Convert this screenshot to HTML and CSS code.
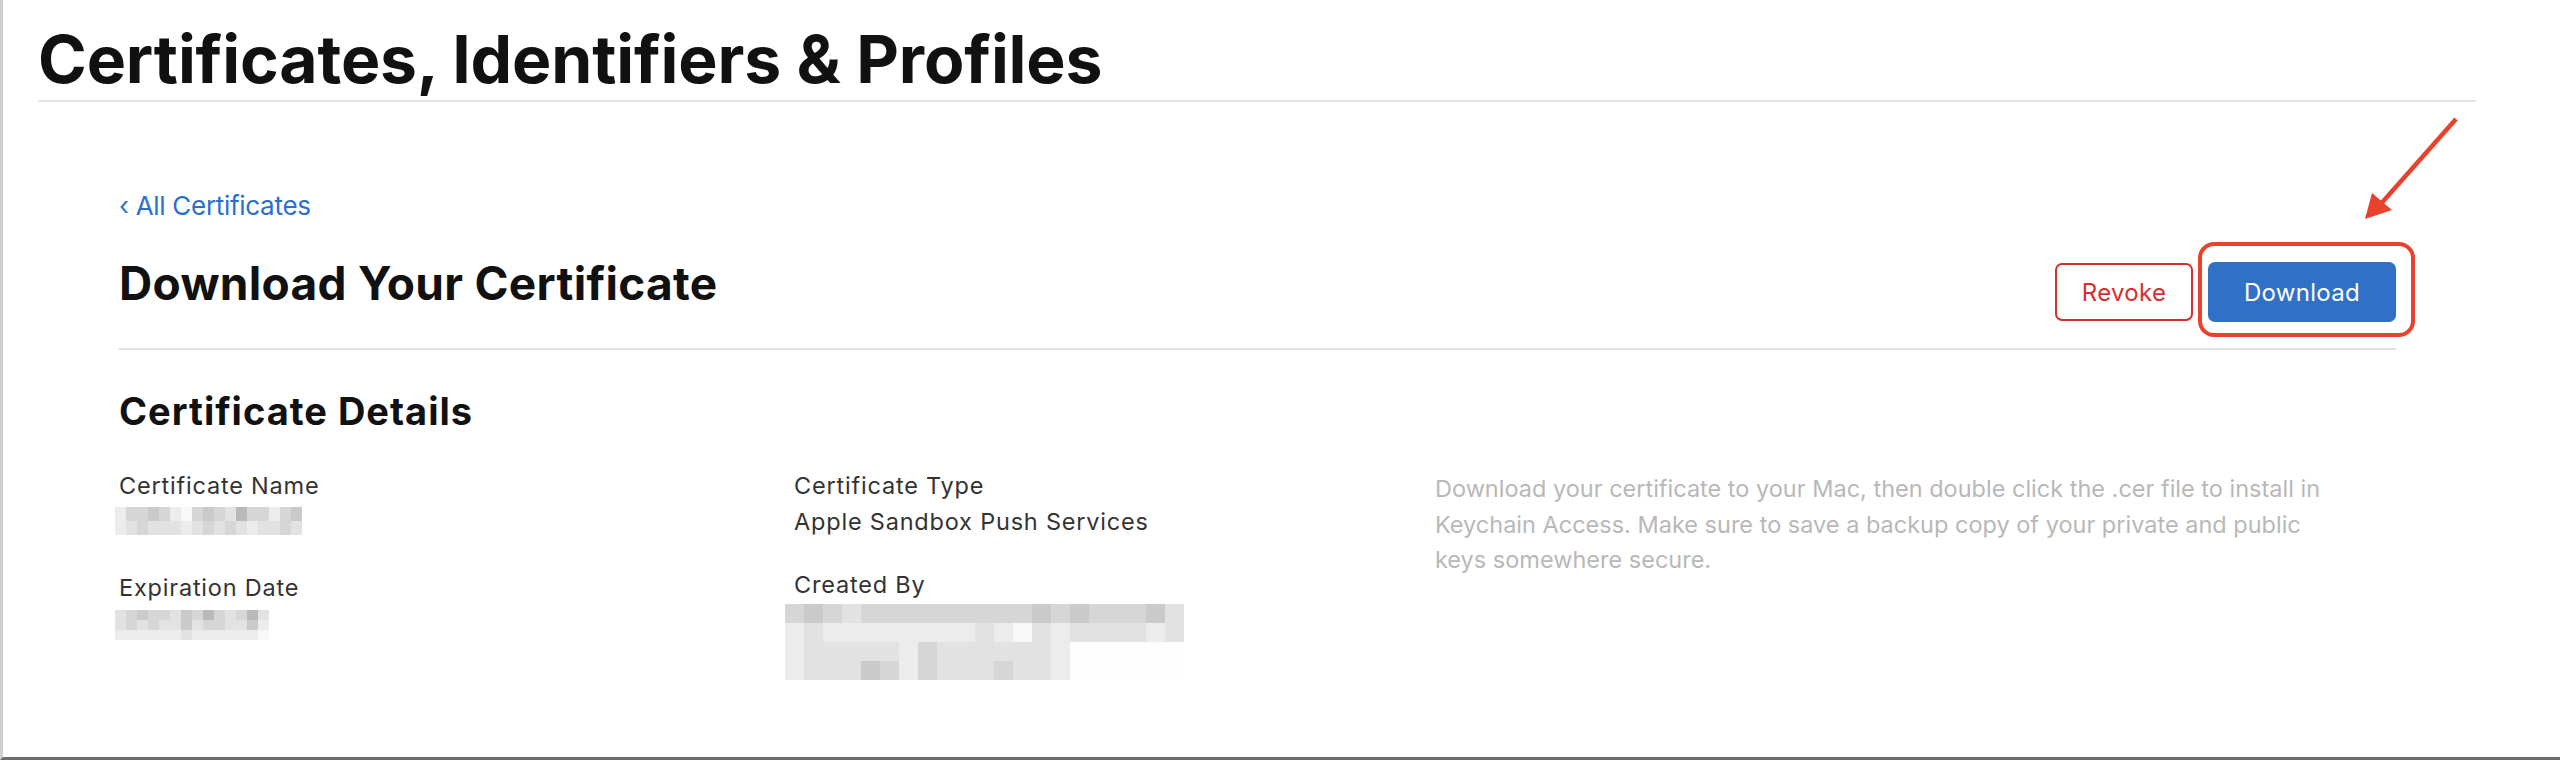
FILE: index.html
```html
<!DOCTYPE html>
<html lang="en">

<head>
    <meta charset="UTF-8">
    <meta name="viewport" content="width=device-width, initial-scale=1.0">
    <title>Certificates, Identifiers &amp; Profiles</title>
    <link rel="stylesheet" href="styles.css">
</head>

<body>
    <div class="page">
        <header class="page-header">
            <h1>Certificates, Identifiers &amp; Profiles</h1>
        </header>

        <main class="content">
            <a class="back-link" href="#">&lsaquo; All Certificates</a>

            <div class="title-row">
                <h2>Download Your Certificate</h2>
                <div class="actions">
                    <button class="btn btn-revoke">Revoke</button>
                    <span class="highlight">
                        <button class="btn btn-download">Download</button>
                    </span>
                </div>
            </div>

            <h3>Certificate Details</h3>

            <div class="details">
                <div class="col">
                    <div class="field">
                        <div class="label">Certificate Name</div>
                        <div class="value">
                            <div class="blur blur-name">
                                <span class="s1"></span><span class="s3"></span><span class="s3"></span><span class="s4"></span><span class="s3"></span><span class="s1"></span><span class="s0"></span><span class="s3"></span><span class="s4"></span><span class="s3"></span><span class="s2"></span><span class="s5"></span><span class="s3"></span><span class="s3"></span><span class="s1"></span><span class="s3"></span><span class="s4"></span>
                                <span class="s1"></span><span class="s2"></span><span class="s3"></span><span class="s2"></span><span class="s2"></span><span class="s2"></span><span class="s1"></span><span class="s2"></span><span class="s3"></span><span class="s2"></span><span class="s3"></span><span class="s2"></span><span class="s1"></span><span class="s2"></span><span class="s2"></span><span class="s3"></span><span class="s2"></span>
                            </div>
                        </div>
                    </div>
                    <div class="field">
                        <div class="label">Expiration Date</div>
                        <div class="value">
                            <div class="blur blur-date">
                                <span class="s2"></span><span class="s3"></span><span class="s4"></span><span class="s3"></span><span class="s3"></span><span class="s2"></span><span class="s4"></span><span class="s3"></span><span class="s5"></span><span class="s3"></span><span class="s2"></span><span class="s3"></span><span class="s5"></span><span class="s2"></span>
                                <span class="s2"></span><span class="s3"></span><span class="s2"></span><span class="s3"></span><span class="s2"></span><span class="s2"></span><span class="s4"></span><span class="s2"></span><span class="s3"></span><span class="s3"></span><span class="s2"></span><span class="s2"></span><span class="s4"></span><span class="s1"></span>
                                <span class="s1"></span><span class="s1"></span><span class="s1"></span><span class="s1"></span><span class="s1"></span><span class="s1"></span><span class="s2"></span><span class="s1"></span><span class="s1"></span><span class="s1"></span><span class="s1"></span><span class="s1"></span><span class="s1"></span><span class="s0"></span>
                            </div>
                        </div>
                    </div>
                </div>

                <div class="col">
                    <div class="field">
                        <div class="label">Certificate Type</div>
                        <div class="value">Apple Sandbox Push Services</div>
                    </div>
                    <div class="field">
                        <div class="label">Created By</div>
                        <div class="value">
                            <div class="blur blur-owner">
                                <span class="s3"></span><span class="s4"></span><span class="s3"></span><span class="s2"></span><span class="s3"></span><span class="s3"></span><span class="s3"></span><span class="s3"></span><span class="s3"></span><span class="s3"></span><span class="s3"></span><span class="s3"></span><span class="s3"></span><span class="s4"></span><span class="s3"></span><span class="s4"></span><span class="s3"></span><span class="s3"></span><span class="s3"></span><span class="s4"></span><span class="s2"></span>
                                <span class="s1"></span><span class="s2"></span><span class="s1"></span><span class="s1"></span><span class="s1"></span><span class="s1"></span><span class="s1"></span><span class="s1"></span><span class="s1"></span><span class="s1"></span><span class="s2"></span><span class="s1"></span><span class="s0"></span><span class="s2"></span><span class="s1"></span><span class="s2"></span><span class="s2"></span><span class="s2"></span><span class="s2"></span><span class="s1"></span><span class="s2"></span>
                                <span class="s1"></span><span class="s2"></span><span class="s2"></span><span class="s2"></span><span class="s2"></span><span class="s2"></span><span class="s1"></span><span class="s3"></span><span class="s2"></span><span class="s2"></span><span class="s2"></span><span class="s2"></span><span class="s2"></span><span class="s2"></span><span class="s1"></span><span class="e"></span><span class="e"></span><span class="e"></span><span class="e"></span><span class="e"></span><span class="e"></span>
                                <span class="s1"></span><span class="s2"></span><span class="s2"></span><span class="s2"></span><span class="s4"></span><span class="s3"></span><span class="s1"></span><span class="s3"></span><span class="s2"></span><span class="s2"></span><span class="s2"></span><span class="s3"></span><span class="s2"></span><span class="s2"></span><span class="s1"></span><span class="e"></span><span class="e"></span><span class="e"></span><span class="e"></span><span class="e"></span><span class="e"></span>
                            </div>
                        </div>
                    </div>
                </div>

                <p class="hint">Download your certificate to your Mac, then double click the .cer file to install in Keychain Access. Make sure to save a backup copy of your private and public<br>keys somewhere secure.</p>
            </div>
        </main>

        <!-- annotation arrow -->
        <svg class="arrow" width="110" height="120" viewBox="0 0 110 120">
            <line x1="101" y1="9" x2="24" y2="96" stroke="#e8412c" stroke-width="4.5" />
            <polygon points="10,109 17,83 37,100" fill="#e8412c" />
        </svg>
    </div>
</body>

</html>
```

FILE: styles.css
```css
* {
    box-sizing: border-box;
}

body {
    margin: 0;
    background: #fff;
    font-family: Inter, "Liberation Sans", sans-serif;
    color: #1d1d1f;
}

.page {
    position: relative;
    height: 760px;
    border-left: 3px solid #cfcfcf;
    border-bottom: 3px solid #6c6c6c;
}

.page-header {
    margin-left: 35px;
    width: 2438px;
    padding-top: 19px;
    padding-bottom: 1px;
    border-bottom: 2px solid #e3e3e3;
}

.page-header h1 {
    margin: 0;
    font-size: 66px;
    line-height: 80px;
    font-weight: 700;
    letter-spacing: -0.15px;
    color: #111;
}

.content {
    margin-left: 116px;
    width: 2277px;
    padding-top: 88px;
}

.back-link {
    display: block;
    font-size: 26px;
    line-height: 32px;
    letter-spacing: -0.3px;
    color: #2a6fd0;
    text-decoration: none;
}

.title-row {
    display: flex;
    justify-content: space-between;
    align-items: flex-start;
    margin-top: 35px;
    padding-bottom: 26px;
    border-bottom: 2px solid #e0e0e0;
}

.title-row h2 {
    margin: 0;
    font-size: 46px;
    line-height: 52px;
    font-weight: 700;
    letter-spacing: 0.3px;
    color: #111;
}

.actions {
    display: flex;
    align-items: center;
    gap: 15px;
    margin-top: 5px;
}

.btn {
    font-family: Inter, "Liberation Sans", sans-serif;
    font-size: 24px;
    letter-spacing: 0.3px;
    border-radius: 7px;
    cursor: pointer;
}

.btn-revoke {
    width: 138px;
    height: 58px;
    background: #fff;
    color: #d3302f;
    border: 2px solid #d3302f;
}

.btn-download {
    display: block;
    width: 188px;
    height: 60px;
    background: #3170c7;
    color: #fff;
    border: none;
}

.highlight {
    position: relative;
    display: block;
}

.highlight::after {
    content: "";
    position: absolute;
    left: -10px;
    right: -19px;
    top: -20px;
    bottom: -15px;
    border: 4px solid #e8412c;
    border-radius: 16px;
}

.content h3 {
    margin: 39px 0 0;
    font-size: 38px;
    line-height: 44px;
    font-weight: 700;
    letter-spacing: 1px;
    color: #111;
}

.details {
    display: grid;
    grid-template-columns: 675px 641px 1fr;
    margin-top: 35px;
}

.field {
    margin-bottom: 27px;
}

.label,
.value {
    font-size: 23.5px;
    line-height: 36px;
    letter-spacing: 0.8px;
    color: #333;
}

.value {
    min-height: 36px;
}

.blur {
    display: grid;
}

.blur span {
    display: block;
}

.blur-name {
    grid-template-columns: repeat(17, 11px);
    grid-auto-rows: 14px;
    margin-left: -4px;
    margin-top: 3px;
}

.blur-date {
    grid-template-columns: repeat(14, 11px);
    grid-auto-rows: 10px;
    margin-left: -4px;
    margin-top: 4px;
}

.blur-owner {
    grid-template-columns: repeat(21, 19px);
    grid-auto-rows: 19px;
    margin-left: -9px;
    margin-top: 1px;
}

.s0 { background: #f8f8f8; }
.s1 { background: #ececec; }
.s2 { background: #e2e2e2; }
.s3 { background: #d6d6d6; }
.s4 { background: #cacaca; }
.s5 { background: #b9b9b9; }
.e { background: #fdfdfd; }

.hint {
    margin: 3px 0 0;
    font-size: 23.5px;
    line-height: 35.5px;
    color: #b8b8b8;
}

.arrow {
    position: absolute;
    left: 2352px;
    top: 110px;
}
```
